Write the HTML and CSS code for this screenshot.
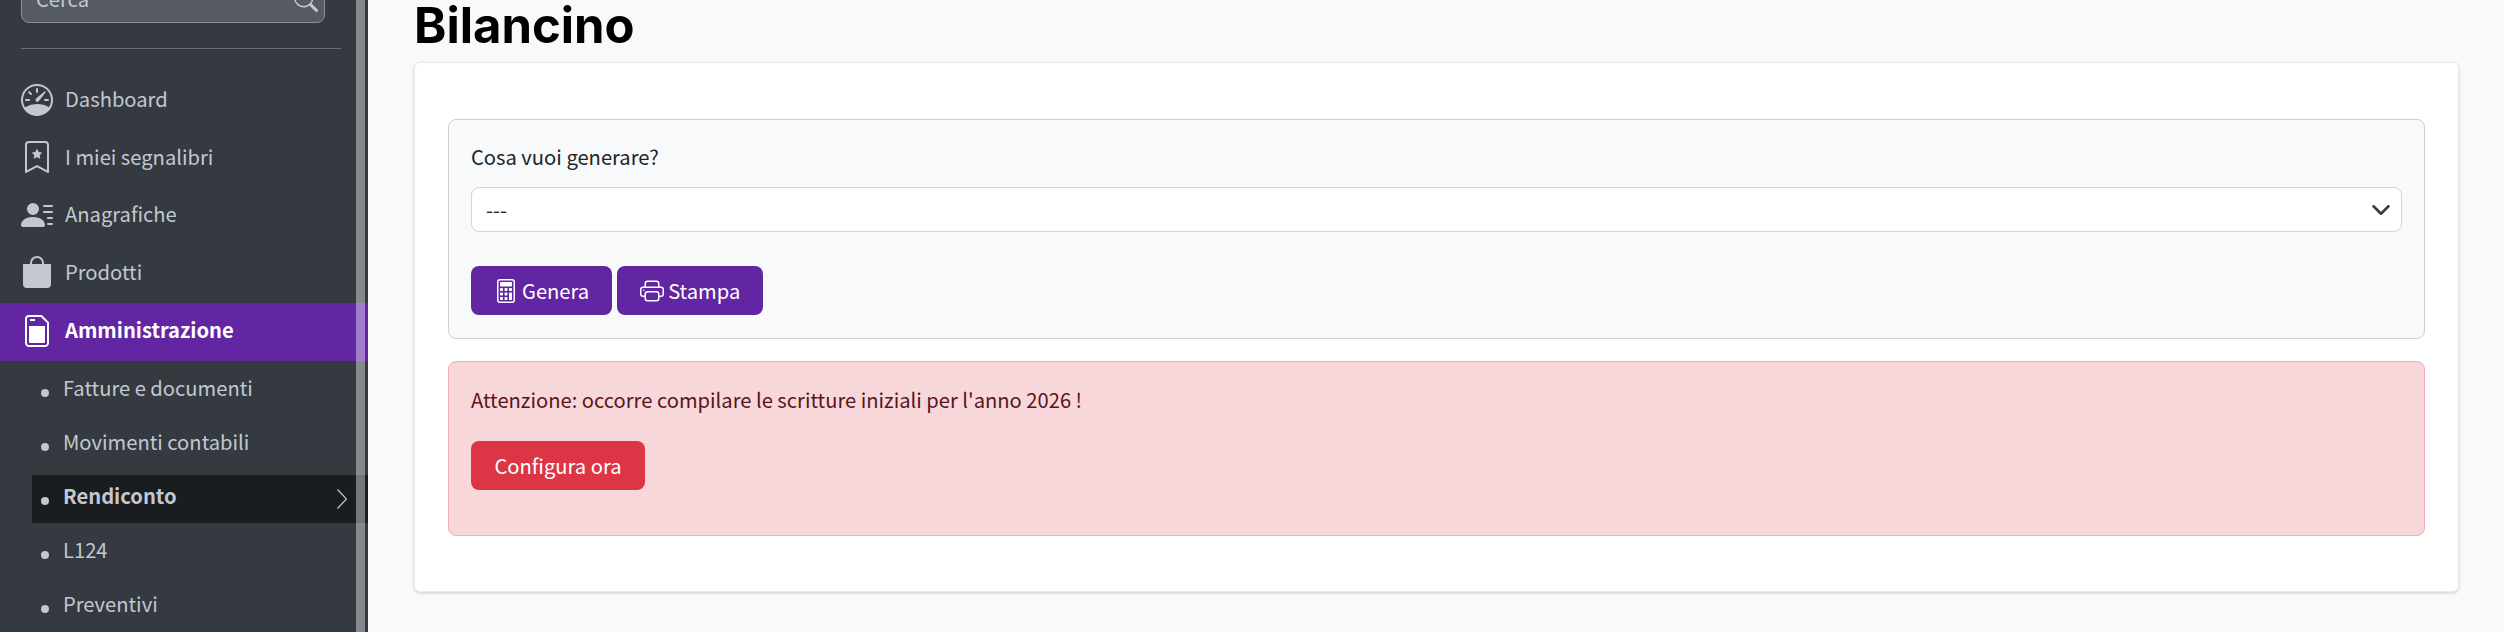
FILE: index.html
```html
<!DOCTYPE html>
<html lang="it">
<head>
<meta charset="utf-8">
<title>Bilancino</title>
<link rel="stylesheet" href="styles.css">
</head>
<body>
<aside class="sidebar">
  <div class="search">
    <span class="search-text">Cerca</span>
    <svg class="search-icon" viewBox="0 0 16 16" fill="currentColor"><path d="M11.742 10.344a6.5 6.5 0 1 0-1.397 1.398h-.001q.044.06.098.115l3.85 3.85a1 1 0 0 0 1.415-1.414l-3.85-3.85a1 1 0 0 0-.115-.1zM12 6.5a5.5 5.5 0 1 1-11 0 5.5 5.5 0 0 1 11 0"/></svg>
  </div>
  <div class="divider"></div>
  <nav class="nav">
    <a class="item">
      <svg class="icon" viewBox="0 0 16 16" fill="currentColor"><path d="M8 2a.5.5 0 0 1 .5.5V4a.5.5 0 0 1-1 0V2.5A.5.5 0 0 1 8 2M3.732 3.732a.5.5 0 0 1 .707 0l.915.914a.5.5 0 1 1-.708.708l-.914-.915a.5.5 0 0 1 0-.707M2 8a.5.5 0 0 1 .5-.5h1.586a.5.5 0 0 1 0 1H2.5A.5.5 0 0 1 2 8m9.5 0a.5.5 0 0 1 .5-.5h1.5a.5.5 0 0 1 0 1H12a.5.5 0 0 1-.5-.5m.754-4.246a.39.39 0 0 0-.527-.02L7.547 7.31A.91.91 0 1 0 8.85 8.569l3.434-4.297a.39.39 0 0 0-.029-.518z"/><path d="M6.664 15.889A8 8 0 1 1 9.336.11a8 8 0 0 1-2.672 15.78zm-4.665-4.283A11.95 11.95 0 0 1 8 10c2.186 0 4.236.585 6.001 1.606a7 7 0 1 0-12.002 0"/></svg>
      <span class="item-text">Dashboard</span>
    </a>
    <a class="item">
      <svg class="icon" viewBox="0 0 16 16" fill="currentColor"><path d="M7.84 4.1a.178.178 0 0 1 .32 0l.634 1.285a.18.18 0 0 0 .134.098l1.42.206c.145.021.204.2.098.303L9.42 6.993a.18.18 0 0 0-.051.158l.242 1.414a.178.178 0 0 1-.258.187l-1.27-.668a.18.18 0 0 0-.165 0l-1.27.668a.178.178 0 0 1-.257-.187l.242-1.414a.18.18 0 0 0-.05-.158l-1.03-1.001a.178.178 0 0 1 .098-.303l1.42-.206a.18.18 0 0 0 .134-.098z"/><path d="M2 2a2 2 0 0 1 2-2h8a2 2 0 0 1 2 2v13.5a.5.5 0 0 1-.777.416L8 13.101l-5.223 2.815A.5.5 0 0 1 2 15.5zm2-1a1 1 0 0 0-1 1v12.566l4.723-2.482a.5.5 0 0 1 .554 0L13 14.566V2a1 1 0 0 0-1-1z"/></svg>
      <span class="item-text">I miei segnalibri</span>
    </a>
    <a class="item">
      <svg class="icon" viewBox="0 0 16 16" fill="currentColor"><path d="M6 8a3 3 0 1 0 0-6 3 3 0 0 0 0 6m-5 6s-1 0-1-1 1-4 6-4 6 3 6 4-1 1-1 1zM11 3.5a.5.5 0 0 1 .5-.5h4a.5.5 0 0 1 0 1h-4a.5.5 0 0 1-.5-.5m.5 2.5a.5.5 0 0 0 0 1h4a.5.5 0 0 0 0-1zm2 3a.5.5 0 0 0 0 1h2a.5.5 0 0 0 0-1zm0 3a.5.5 0 0 0 0 1h2a.5.5 0 0 0 0-1z"/></svg>
      <span class="item-text">Anagrafiche</span>
    </a>
    <a class="item">
      <svg class="icon" viewBox="0 0 16 16" fill="currentColor"><path d="M8 1a2.5 2.5 0 0 1 2.5 2.5V4h-5v-.5A2.5 2.5 0 0 1 8 1m3.5 3v-.5a3.5 3.5 0 1 0-7 0V4H1v10a2 2 0 0 0 2 2h10a2 2 0 0 0 2-2V4z"/></svg>
      <span class="item-text">Prodotti</span>
    </a>
    <a class="item item-active">
      <svg class="icon" viewBox="0 0 16 16" fill="none" stroke="currentColor"><path d="M4 .5h6.2L13.5 3.8V14a1.5 1.5 0 0 1-1.5 1.5H4A1.5 1.5 0 0 1 2.500 14V2A1.500 1.500 0 0 1 4 .5z"/><path d="M4.500 2.500h2.500" /><path d="M4 5.500h8V13.500a.5.5 0 0 1-.5.5H4.500a.5.500 0 0 1-.5-.5z" fill="currentColor" stroke="none"/></svg>
      <span class="item-text">Amministrazione</span>
    </a>
    <ul class="subnav">
      <li class="sub"><span class="dot"></span><span>Fatture e documenti</span></li>
      <li class="sub"><span class="dot"></span><span>Movimenti contabili</span></li>
      <li class="sub sub-active"><span class="dot"></span><span>Rendiconto</span>
        <svg class="sub-arrow" viewBox="0 0 10 20" fill="none" stroke="currentColor" stroke-width="1.200"><path d="M.5.5 9.500 10 .5 19.500"/></svg>
      </li>
      <li class="sub"><span class="dot"></span><span>L124</span></li>
      <li class="sub"><span class="dot"></span><span>Preventivi</span></li>
    </ul>
  </nav>
  <div class="scroll-thumb"></div>
</aside>
<main class="main">
  <h1 class="title">Bilancino</h1>
  <section class="card">
    <form class="panel">
      <label class="label" for="kind">Cosa vuoi generare?</label>
      <div class="select-wrap">
        <select class="select" id="kind"><option>---</option></select>
        <svg class="select-arrow" viewBox="0 0 16 16" fill="none" stroke="#343a40" stroke-linecap="round" stroke-linejoin="round" stroke-width="2"><path d="m2 5 6 6 6-6"/></svg>
      </div>
      <div class="actions">
        <button class="btn btn-purple" type="button">
          <svg class="btn-icon" viewBox="0 0 16 16" fill="currentColor"><path d="M12 1a1 1 0 0 1 1 1v12a1 1 0 0 1-1 1H4a1 1 0 0 1-1-1V2a1 1 0 0 1 1-1zM4 0a2 2 0 0 0-2 2v12a2 2 0 0 0 2 2h8a2 2 0 0 0 2-2V2a2 2 0 0 0-2-2z"/><path d="M4 2.500a.5.5 0 0 1 .5-.5h7a.5.5 0 0 1 .5.5v2a.5.5 0 0 1-.5.5h-7a.5.5 0 0 1-.5-.5zm0 4a.5.5 0 0 1 .5-.5h1a.5.5 0 0 1 .5.5v1a.5.5 0 0 1-.5.5h-1a.5.5 0 0 1-.5-.5zm0 3a.5.5 0 0 1 .5-.5h1a.5.5 0 0 1 .5.5v1a.5.5 0 0 1-.5.5h-1a.5.5 0 0 1-.5-.5zm0 3a.5.5 0 0 1 .5-.5h1a.5.5 0 0 1 .5.5v1a.5.5 0 0 1-.5.5h-1a.5.5 0 0 1-.5-.5zm3-6a.5.5 0 0 1 .5-.5h1a.5.5 0 0 1 .5.5v1a.5.5 0 0 1-.5.5h-1a.5.5 0 0 1-.5-.5zm0 3a.5.5 0 0 1 .5-.5h1a.5.5 0 0 1 .5.5v1a.5.5 0 0 1-.5.5h-1a.5.5 0 0 1-.5-.5zm0 3a.5.5 0 0 1 .5-.5h1a.5.5 0 0 1 .5.5v1a.5.5 0 0 1-.5.5h-1a.5.5 0 0 1-.5-.5zm3-6a.5.5 0 0 1 .5-.5h1a.5.5 0 0 1 .5.5v1a.5.5 0 0 1-.5.5h-1a.5.5 0 0 1-.5-.5zm0 3a.5.5 0 0 1 .5-.5h1a.5.5 0 0 1 .5.5v4a.5.5 0 0 1-.5.5h-1a.5.5 0 0 1-.5-.5z"/></svg>
          <span>Genera</span>
        </button>
        <button class="btn btn-purple" type="button">
          <svg class="btn-icon" viewBox="0 0 16 16" fill="currentColor"><path d="M2.500 8a.5.5 0 1 0 0-1 .5.5 0 0 0 0 1"/><path d="M5 1a2 2 0 0 0-2 2v2H2a2 2 0 0 0-2 2v3a2 2 0 0 0 2 2h1v1a2 2 0 0 0 2 2h6a2 2 0 0 0 2-2v-1h1a2 2 0 0 0 2-2V7a2 2 0 0 0-2-2h-1V3a2 2 0 0 0-2-2zM4 3a1 1 0 0 1 1-1h6a1 1 0 0 1 1 1v2H4zm1 5a2 2 0 0 0-2 2v1H2a1 1 0 0 1-1-1V7a1 1 0 0 1 1-1h12a1 1 0 0 1 1 1v3a1 1 0 0 1-1 1h-1v-1a2 2 0 0 0-2-2zm7 2v3a1 1 0 0 1-1 1H5a1 1 0 0 1-1-1v-3a1 1 0 0 1 1-1h6a1 1 0 0 1 1 1"/></svg>
          <span>Stampa</span>
        </button>
      </div>
    </form>
    <div class="alert">
      <p class="alert-text">Attenzione: occorre compilare le scritture iniziali per l'anno 2026 !</p>
      <button class="btn btn-red" type="button">Configura ora</button>
    </div>
  </section>
</main>
</body>
</html>
```
FILE: styles.css
```css
* { box-sizing: border-box; }
html, body { height: 632px; margin: 0; overflow: hidden; }
body {
  display: flex;
  background: #f8f9fa;
  color: #212529;
  font-family: "Noto Sans CJK SC", "Noto Sans", sans-serif;
  font-size: 20.16px;
  line-height: 30px;
}

.sidebar {
  position: relative;
  flex: 0 0 368px;
  height: 632px;
  background: #343a40;
  color: #c2c7d0;
  overflow: hidden;
}
.search {
  display: flex;
  align-items: flex-end;
  justify-content: space-between;
  width: 304px;
  height: 45px;
  margin: -22px 0 0 21px;
  padding: 0 6px 10px 14px;
  background: #565b62;
  border: 1px solid #8d9093;
  border-radius: 8px;
}
.search-text { line-height: 30px; margin-bottom: -2px; }
.search-icon { width: 24px; height: 24px; flex: none; }
.divider {
  height: 1px;
  margin: 25px 27px 0 21px;
  background: #6c7075;
}
.nav { margin-top: 22px; }
.item {
  display: flex;
  align-items: center;
  gap: 12px;
  height: 57.5px;
  padding-left: 21px;
}
.item-text { padding-bottom: 1px; }
.icon { width: 32px; height: 32px; flex: none; }
.item-active {
  height: 58px;
  margin-top: 2px;
  background: #6326a3;
  color: #fff;
  font-weight: 700;
}
.item-active .item-text { padding-bottom: 4px; }
.item-active .icon { margin-bottom: 2px; }
.subnav { list-style: none; margin: 0; padding: 0; }
.sub {
  display: flex;
  align-items: center;
  height: 48px;
  margin: 6px 0 0 32px;
  padding: 0 21px 6px 9px;
}
.dot {
  flex: none;
  width: 8px;
  height: 8px;
  margin: 10px 14px 0 0;
  border-radius: 50%;
  background: currentColor;
}
.sub-active { background: #1a1d20; font-weight: 700; }
.sub-arrow { width: 10px; height: 20px; margin: 6px 0 0 auto; flex: none; }
.scroll-thumb {
  position: absolute;
  top: 0;
  bottom: 0;
  left: 356px;
  width: 9px;
  background: rgba(255, 255, 255, .4);
}

.main { flex: 1; min-width: 0; padding: 0 45px 0 46px; }
.title {
  height: 62px;
  margin: 0;
  color: #000;
  font-family: "Inter", sans-serif;
  font-size: 49px;
  line-height: 52px;
  font-weight: 700;
}
.card {
  height: 530px;
  padding: 56px 33px 0;
  background: #fff;
  border: 1px solid #e9ebec;
  border-radius: 6px;
  box-shadow: 0 1px 3px rgba(0, 0, 0, .18);
}
.panel {
  height: 220px;
  padding: 22px;
  background: #f8f9fa;
  border: 1px solid #cdd0d3;
  border-radius: 8px;
}
.label { display: block; height: 45px; line-height: 30px; }
.select-wrap { position: relative; }
.select {
  display: block;
  width: 100%;
  height: 45px;
  padding: 0 14px;
  border: 1px solid #ced4da;
  border-radius: 8px;
  background: #fff;
  color: #212529;
  font: inherit;
  appearance: none;
}
.select-arrow {
  position: absolute;
  top: 13px;
  right: 11px;
  width: 20px;
  height: 20px;
}
.actions { display: flex; gap: 5px; margin-top: 34px; }
.btn {
  display: inline-flex;
  align-items: center;
  justify-content: center;
  height: 49px;
  padding: 0 23px;
  border: 0;
  border-radius: 8px;
  color: #fff;
  font: inherit;
}
.btn-purple { background: #6326a3; gap: 4px; }
.btn-red { background: #dc3545; padding: 0 23.5px; }
.btn-icon { width: 24px; height: 24px; flex: none; }
.alert {
  height: 175px;
  margin-top: 22px;
  padding: 23px 22px;
  background: #f8d7da;
  border: 1px solid #f1aeb5;
  border-radius: 8px;
  color: #58151c;
}
.alert-text { margin: 0 0 26px; }
```
